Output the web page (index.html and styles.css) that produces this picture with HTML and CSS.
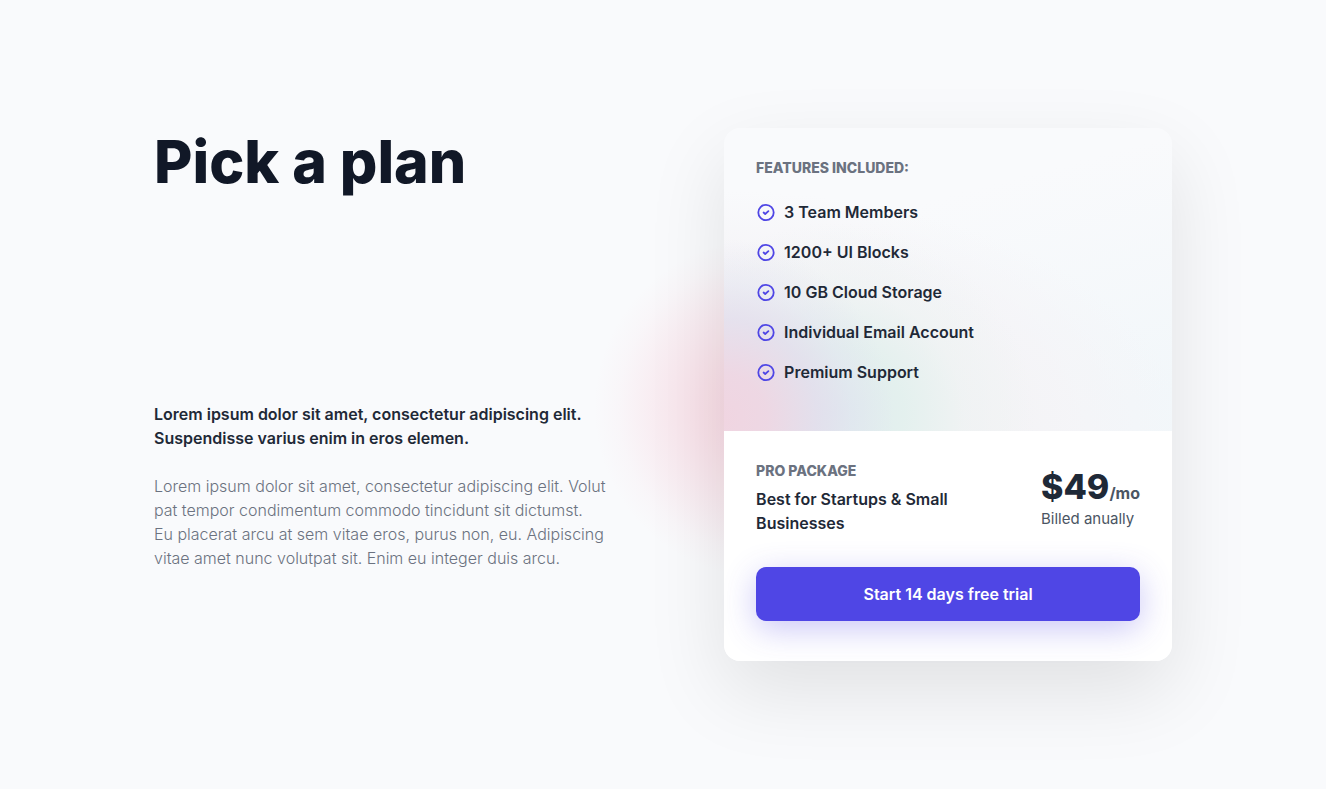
FILE: index.html
```html
<!DOCTYPE html>
<html lang="en">
<head>
  <meta charset="utf-8">
  <meta name="viewport" content="width=device-width, initial-scale=1">
  <title>Pick a plan</title>
  <link rel="stylesheet" href="styles.css">
</head>
<body>
  <svg class="sprite" aria-hidden="true">
    <symbol id="check" viewBox="0 0 20 20">
      <circle cx="10" cy="10.5" r="7.7" fill="none" stroke="currentColor" stroke-width="1.8"/>
      <path d="M7.6 10.5 9.2 12 12.4 9.1" fill="none" stroke="currentColor" stroke-width="1.8" stroke-linecap="round" stroke-linejoin="round"/>
    </symbol>
  </svg>
  <main class="pricing">
    <section class="intro">
      <h1 class="title">Pick a plan</h1>
      <div class="copy">
        <p class="lead">Lorem ipsum dolor sit amet, consectetur adipiscing elit.<br>Suspendisse varius enim in eros elemen.</p>
        <p class="body-text">Lorem ipsum dolor sit amet, consectetur adipiscing elit. Volut<br>pat tempor condimentum commodo tincidunt sit dictumst.<br>Eu placerat arcu at sem vitae eros, purus non, eu. Adipiscing<br>vitae amet nunc volutpat sit. Enim eu integer duis arcu.</p>
      </div>
    </section>
    <article class="card">
      <div class="features">
        <h2 class="label">FEATURES INCLUDED:</h2>
        <ul class="feature-list">
          <li class="feature"><svg class="icon" aria-hidden="true"><use href="#check"/></svg>3 Team Members</li>
          <li class="feature"><svg class="icon" aria-hidden="true"><use href="#check"/></svg>1200+ UI Blocks</li>
          <li class="feature"><svg class="icon" aria-hidden="true"><use href="#check"/></svg>10 GB Cloud Storage</li>
          <li class="feature"><svg class="icon" aria-hidden="true"><use href="#check"/></svg>Individual Email Account</li>
          <li class="feature"><svg class="icon" aria-hidden="true"><use href="#check"/></svg>Premium Support</li>
        </ul>
      </div>
      <div class="offer">
        <div class="summary">
          <div class="package">
            <h2 class="label">PRO PACKAGE</h2>
            <p class="best">Best for Startups &amp; Small<br>Businesses</p>
          </div>
          <div class="price">
            <p class="amount">$49<span class="period">/mo</span></p>
            <p class="billing">Billed anually</p>
          </div>
        </div>
        <button class="cta" type="button">Start 14 days free trial</button>
      </div>
    </article>
  </main>
</body>
</html>
```
FILE: styles.css
```css
* { box-sizing: border-box; }
body {
  margin: 0;
  background: #f9fafc;
  color: #1f2937;
  font-family: Inter, "Liberation Sans", sans-serif;
  font-size: 16px;
  line-height: 24px;
}
h1, h2, p, ul { margin: 0; padding: 0; }
.sprite { position: absolute; width: 0; height: 0; }
.pricing {
  display: grid;
  grid-template-columns: 44% 44%;
  justify-content: space-between;
  padding: 128px 154px;
  overflow: hidden;
}
.intro {
  display: flex;
  flex-direction: column;
  gap: 206px;
}
.title {
  color: #111827;
  font-size: 59px;
  line-height: 68px;
  font-weight: 800;
}
.copy { display: grid; gap: 24px; white-space: nowrap; }
.lead { font-weight: 600; }
.body-text { color: #6b7280; font-weight: 300; }
.card {
  position: relative;
  border-radius: 16px;
  box-shadow: 0 30px 80px rgba(0, 0, 0, 0.1);
}
.card::before {
  content: "";
  position: absolute;
  z-index: -1;
  left: -130px;
  top: 110px;
  width: 340px;
  height: 340px;
  background: radial-gradient(closest-side, rgba(244, 150, 175, 0.38), rgba(244, 150, 175, 0.26) 35%, rgba(244, 150, 175, 0.12) 68%, rgba(244, 150, 175, 0.04) 86%, transparent);
}
.features {
  padding: 28px 32px 47px;
  border-radius: 16px 16px 0 0;
  background:
    radial-gradient(170px 180px at 0 96%, #f0d5e1, rgba(238, 214, 227, 0.95) 25%, rgba(227, 221, 236, 0.8) 55%, rgba(225, 224, 240, 0.4) 75%, rgba(232, 234, 244, 0)),
    radial-gradient(200px 190px at 110px 94%, #dfebee, rgba(225, 240, 237, 0.85) 35%, rgba(236, 243, 242, 0.5) 65%, rgba(244, 246, 248, 0)),
    radial-gradient(460px 240px at 0 100%, rgba(243, 242, 244, 1) 50%, rgba(245, 244, 247, 0.8) 75%, rgba(247, 248, 251, 0)),
    linear-gradient(165deg, #f9fafc 30%, #f2f7fa 90%);
}
.label {
  color: #6b7280;
  font-size: 14px;
  line-height: 24px;
  font-weight: 800;
}
.feature-list {
  display: grid;
  gap: 16px;
  padding-top: 20px;
  list-style: none;
}
.feature {
  display: flex;
  align-items: center;
  gap: 8px;
  font-weight: 600;
}
.icon { width: 20px; height: 20px; color: #4f46e5; }
.offer {
  padding: 28px 32px 40px;
  border-radius: 0 0 16px 16px;
  background: #fff;
}
.summary {
  display: flex;
  align-items: flex-start;
  justify-content: space-between;
  padding-bottom: 32px;
}
.package { display: grid; gap: 4px; }
.best { font-weight: 600; }
.price { padding-top: 8px; }
.amount { font-size: 34px; line-height: 40px; font-weight: 800; }
.period { color: #4b5563; font-size: 16px; line-height: 24px; font-weight: 700; }
.billing { color: #4b5563; font-size: 15px; }
.cta {
  display: block;
  width: 100%;
  padding: 15px;
  border: 0;
  border-radius: 10px;
  background: #4f46e5;
  color: #fff;
  font: 600 16px/24px Inter, "Liberation Sans", sans-serif;
  box-shadow: 0 8px 32px rgba(79, 70, 229, 0.3);
  cursor: pointer;
}
```
